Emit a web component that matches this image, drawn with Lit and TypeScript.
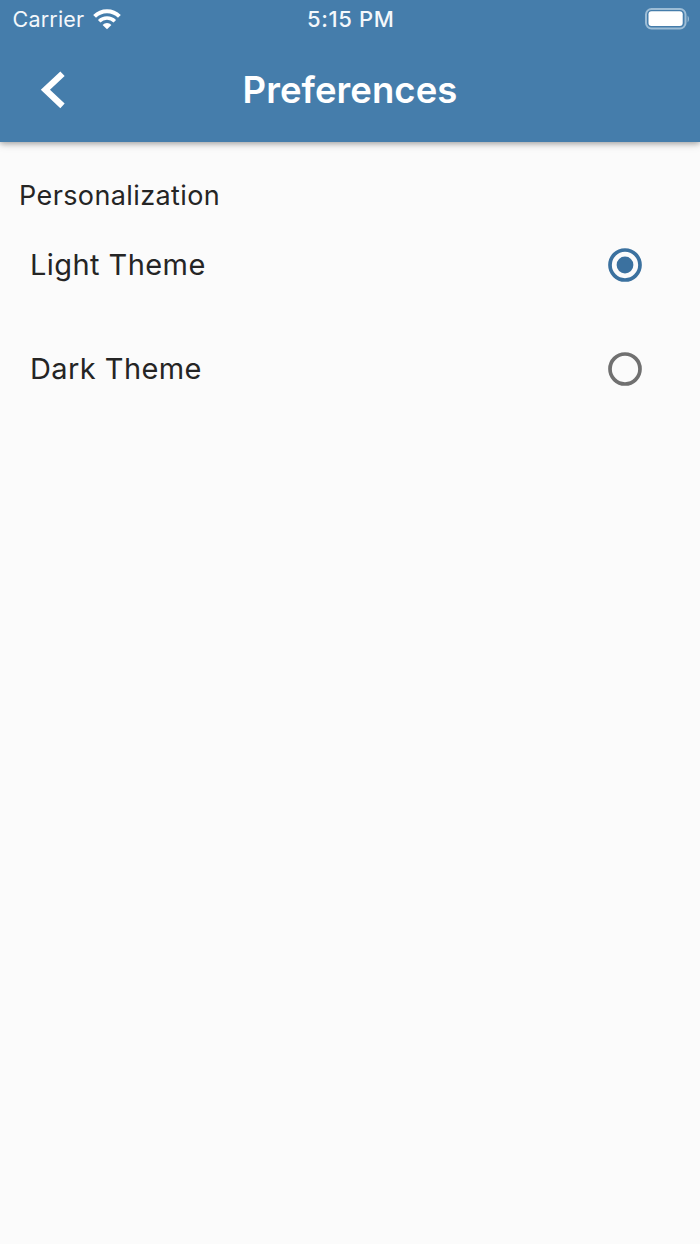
import { LitElement, html, css } from "lit";
import { customElement, property, state } from "lit/decorators.js";

@customElement("theme-option")
class ThemeOption extends LitElement {
  @property() label = "";
  @property({ type: Boolean }) checked = false;

  static styles = css`
    :host { display: block; }
    .row {
      display: flex;
      align-items: center;
      justify-content: space-between;
      height: 104px;
      padding: 0 58px 0 30px;
      cursor: pointer;
    }
    .label { font-size: 29px; line-height: 36px; letter-spacing: 0.42px; white-space: nowrap; }
    svg { display: block; }
  `;

  render() {
    const color = this.checked ? "#3b719f" : "#707070";
    return html`
      <div class="row" role="radio" aria-checked=${this.checked}>
        <span class="label">${this.label}</span>
        <svg width="34" height="34" viewBox="0 0 34 34">
          <circle cx="17" cy="17" r="15" fill="none" stroke=${color} stroke-width="3.7" />
          ${this.checked
            ? html`<svg width="34" height="34"><circle cx="17" cy="17" r="8.4" fill=${color} /></svg>`
            : null}
        </svg>
      </div>
    `;
  }
}

@customElement("app-root")
class AppRoot extends LitElement {
  @state() theme = "Light Theme";

  static styles = css`
    :host {
      display: block;
      min-height: 1244px;
      background: #fbfbfb;
      color: #252525;
      font-family: Inter, "Liberation Sans", sans-serif;
    }
    svg { display: block; }
    header {
      height: 141.6px;
      background: #457dab;
      color: #fff;
      box-shadow: 0 1px 8px rgba(0, 0, 0, 0.34), 0 2px 4px rgba(0, 0, 0, 0.1);
    }
    .status {
      display: grid;
      grid-template-columns: 1fr auto 1fr;
      align-items: center;
      height: 38px;
      padding: 0 10px 0 12.5px;
      line-height: 28px;
      color: #f4f8fb;
    }
    .carrier { display: flex; align-items: center; gap: 8.5px; font-size: 21.5px; letter-spacing: 0.2px; }
    .time { font-size: 22px; font-weight: 500; letter-spacing: 0.65px; margin-left: -1px; }
    .battery { justify-self: end; }
    .bar {
      display: grid;
      grid-template-columns: 106px 1fr 106px;
      align-items: center;
      height: 103.6px;
    }
    .back { justify-self: start; padding-left: 40px; }
    h1 {
      margin: 0;
      text-align: center;
      font-size: 36.5px;
      line-height: 46px;
      font-weight: 600;
      letter-spacing: 0.05px;
    }
    main { padding-top: 37.4px; }
    h2 {
      margin: 0 0 0 19px;
      font-size: 27px;
      line-height: 34px;
      font-weight: 400;
      letter-spacing: 0.4px;
    }
  `;

  render() {
    return html`
      <header>
        <div class="status">
          <div class="carrier">
            <span>Carrier</span>
            <svg width="28" height="21" viewBox="0 0 28 21" fill="none" stroke="#fff">
              <path d="M1.6 7.4a17.6 17.6 0 0 1 24.8 0" stroke-width="4" />
              <path d="M6.2 12.2a11.2 11.2 0 0 1 15.6 0" stroke-width="3.6" />
              <path d="M9.6 15.9a6.3 6.3 0 0 1 8.8 0L14 20.2z" fill="#fff" stroke="none" />
            </svg>
          </div>
          <span class="time">5:15 PM</span>
          <svg class="battery" width="46" height="22" viewBox="0 0 46 22">
            <rect x="2" y="1" width="39.5" height="19.5" rx="5.5" fill="none" stroke="#9dbdd6" stroke-width="2" />
            <rect x="4.5" y="3.3" width="34.2" height="14.7" rx="3" fill="#fff" />
            <path d="M43.6 7.5q1.4 1.2 1.4 3.5t-1.4 3.5z" fill="#9dbdd6" />
          </svg>
        </div>
        <div class="bar">
          <svg class="back" width="26" height="38" viewBox="0 0 26 38">
            <path d="M22.5 2.7L5.4 18.8L22.5 34.9" fill="none" stroke="#fff" stroke-width="6.3" />
          </svg>
          <h1>Preferences</h1>
        </div>
      </header>
      <main>
        <h2>Personalization</h2>
        <div role="radiogroup">
          ${["Light Theme", "Dark Theme"].map(
            (label) => html`<theme-option
              .label=${label}
              .checked=${this.theme === label}
              @click=${() => (this.theme = label)}
            ></theme-option>`
          )}
        </div>
      </main>
    `;
  }
}
